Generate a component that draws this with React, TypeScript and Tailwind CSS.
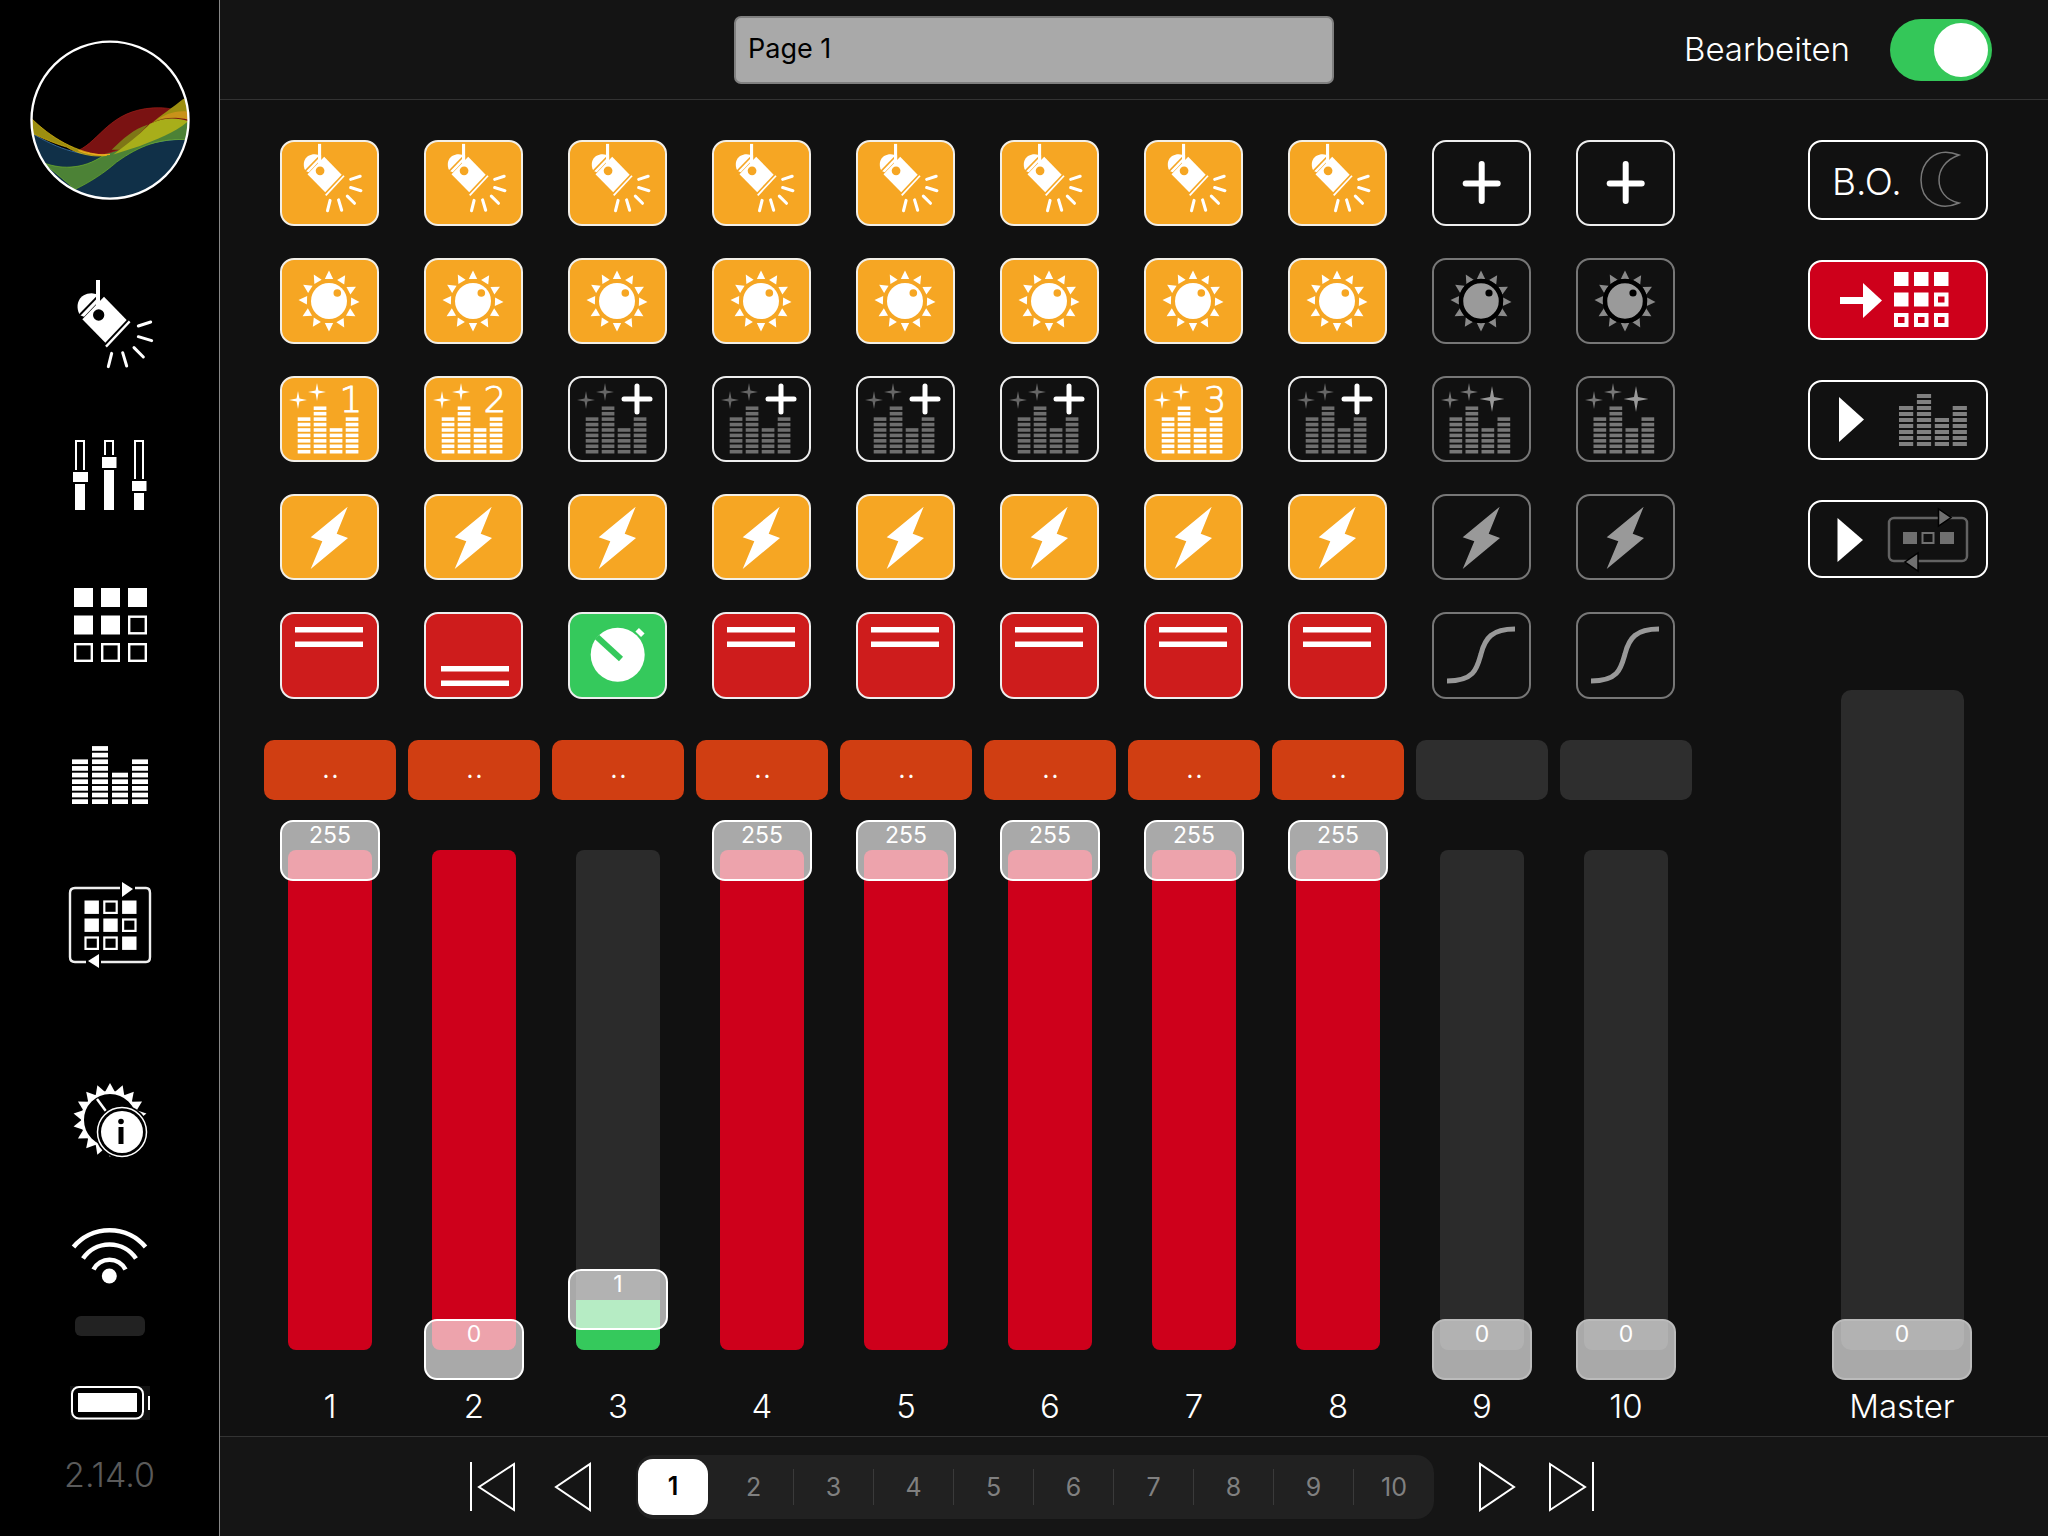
import React from "react";

const range = (n: number) => Array.from({ length: n }, (_, i) => i);

function SpotGlyph({ fg, bg, ray = 9 }: { fg: string; bg: string; ray?: number }) {
  return (
    <g>
      <path d="M240 946 C222 915 238 880 275 880 L300 884 L300 900 L252 950 Z" fill={fg} />
      <path d="M312 890 L380 960 L316 1028 L247 958 Z" fill={fg} />
      <line x1="236" y1="948" x2="296" y2="886" stroke={bg} strokeWidth="6" />
      <line x1="389" y1="964" x2="318" y2="1040" stroke={fg} strokeWidth="7" />
      <rect x="288" y="840" width="12" height="95" fill={fg} />
      <circle cx="296" cy="945" r="17" fill={bg} />
      <g stroke={fg} strokeWidth={ray} strokeLinecap="round" fill="none">
        <line x1="415" y1="978" x2="452" y2="966" />
        <line x1="415" y1="1010" x2="455" y2="1022" />
        <line x1="402" y1="1043" x2="430" y2="1071" />
        <line x1="368" y1="1058" x2="380" y2="1098" />
        <line x1="335" y1="1060" x2="325" y2="1100" />
      </g>
    </g>
  );
}

function Star({ cx, cy, rx, ry, fill }: { cx: number; cy: number; rx: number; ry: number; fill: string }) {
  const w = Math.min(rx, ry) * 0.16;
  return (
    <path
      fill={fill}
      d={`M${cx} ${cy - ry} L${cx + w} ${cy - w} L${cx + rx} ${cy} L${cx + w} ${cy + w} L${cx} ${cy + ry} L${cx - w} ${cy + w} L${cx - rx} ${cy} L${cx - w} ${cy - w} Z`}
    />
  );
}

function EqBars({ x, pitch, w, bottom, segPitch, segH, fill }: { x: number; pitch: number; w: number; bottom: number; segPitch: number; segH: number; fill: string }) {
  const counts = [7, 9, 5, 7];
  return (
    <g fill={fill}>
      {counts.map((c, i) =>
        range(c).map((j) => (
          <rect key={`${i}-${j}`} x={x + i * pitch} y={bottom - segH - j * segPitch} width={w} height={segH} />
        ))
      )}
    </g>
  );
}

function Sun({ fg, gray }: { fg: string; gray?: boolean }) {
  const angles = [0, 32, 62, 92, 120, 150, 180, 212, 240, 272, 302, 330];
  return (
    <g>
      {angles.map((a) => (
        <polygon key={a} points="44.8,21 53.2,21 49,12.5" fill={gray ? "#8a8a8a" : fg} transform={`rotate(${a} 49 43)`} />
      ))}
      {gray ? (
        <>
          <circle cx="49" cy="43" r="20" fill="#9a9a9a" stroke="#000" strokeWidth="4.5" />
          <circle cx="57" cy="35" r="3.6" fill="#000" />
        </>
      ) : (
        <>
          <circle cx="49" cy="43" r="18" fill={fg} />
          <circle cx="57.3" cy="35" r="3.8" fill="#f6a623" />
        </>
      )}
    </g>
  );
}

const BOLT = "67.7,12.7 30.7,43.3 42.3,47.3 30.7,75 68,44 56.7,39.7";

type Kind =
  | "spot" | "sun" | "sunOff" | "plus" | "eq1" | "eq2" | "eq3" | "eqPlus" | "eqOff"
  | "bolt" | "boltOff" | "top" | "bottom" | "timer" | "curve";

const tone: Record<Kind, string> = {
  spot: "bg-[#f6a623] border-[#f2efe8]",
  sun: "bg-[#f6a623] border-[#f2efe8]",
  eq1: "bg-[#f6a623] border-[#f2efe8]",
  eq2: "bg-[#f6a623] border-[#f2efe8]",
  eq3: "bg-[#f6a623] border-[#f2efe8]",
  bolt: "bg-[#f6a623] border-[#f2efe8]",
  top: "bg-[#ce1c1c] border-[#eee]",
  bottom: "bg-[#ce1c1c] border-[#eee]",
  timer: "bg-[#35c95c] border-[#eee]",
  plus: "bg-[#111111] border-[#eee]",
  eqPlus: "bg-[#111111] border-[#eee]",
  sunOff: "bg-[#111111] border-[#777]",
  eqOff: "bg-[#111111] border-[#777]",
  boltOff: "bg-[#111111] border-[#777]",
  curve: "bg-[#111111] border-[#777]",
};

function Glyph({ kind }: { kind: Kind }) {
  switch (kind) {
    case "spot":
      return (
        <g transform="translate(-36 -212) scale(0.257)">
          <SpotGlyph fg="#fff" bg="#f6a623" ray={12} />
        </g>
      );
    case "sun":
      return <Sun fg="#fff" />;
    case "sunOff":
      return <Sun fg="#999" gray />;
    case "plus":
      return (
        <g stroke="#fff" strokeWidth="6" strokeLinecap="round">
          <line x1="49.7" y1="24" x2="49.7" y2="61" />
          <line x1="33.7" y1="43.5" x2="65.7" y2="43.5" />
        </g>
      );
    case "eq1":
    case "eq2":
    case "eq3":
      return (
        <g>
          <EqBars x={17.7} pitch={16} w={12.7} bottom={77.5} segPitch={5.43} segH={3.6} fill="#fff" />
          <Star cx={18} cy={24} rx={9} ry={9} fill="#fff" />
          <Star cx={37} cy={16} rx={9} ry={9} fill="#fff" />
          <text x="71" y="35.5" textAnchor="middle" fontSize="36" fontWeight="200" stroke="#fff" strokeWidth="0.8" fontFamily="'DejaVu Sans', sans-serif" fill="#fff">
            {kind === "eq1" ? "1" : kind === "eq2" ? "2" : "3"}
          </text>
        </g>
      );
    case "eqPlus":
      return (
        <g>
          <EqBars x={17.7} pitch={16} w={12.7} bottom={77.5} segPitch={5.43} segH={3.6} fill="#6e6e6e" />
          <Star cx={18} cy={24} rx={9} ry={9} fill="#666" />
          <Star cx={37} cy={16} rx={9} ry={9} fill="#666" />
          <g stroke="#fff" strokeWidth="5" strokeLinecap="round">
            <line x1="69" y1="10" x2="69" y2="36" />
            <line x1="56" y1="23" x2="82" y2="23" />
          </g>
        </g>
      );
    case "eqOff":
      return (
        <g>
          <EqBars x={17.5} pitch={16} w={12.7} bottom={77.5} segPitch={5.43} segH={3.6} fill="#777" />
          <Star cx={18} cy={24} rx={9} ry={9} fill="#777" />
          <Star cx={37} cy={16} rx={9} ry={9} fill="#777" />
          <Star cx={60} cy={23} rx={12.5} ry={13} fill="#999" />
        </g>
      );
    case "bolt":
      return <polygon points={BOLT} fill="#fff" />;
    case "boltOff":
      return <polygon points={BOLT} fill="#999" />;
    case "top":
      return (
        <g fill="#fff">
          <rect x="15" y="15" width="68" height="5.5" />
          <rect x="15" y="29.5" width="68" height="5.5" />
        </g>
      );
    case "bottom":
      return (
        <g fill="#fff">
          <rect x="17" y="54" width="68" height="5.5" />
          <rect x="17" y="68.5" width="68" height="5.5" />
        </g>
      );
    case "timer":
      return (
        <g>
          <circle cx="49.7" cy="42.7" r="27" fill="#fff" />
          <line x1="29" y1="25" x2="53" y2="47" stroke="#35c95c" strokeWidth="6" />
          <rect x="68" y="18" width="8" height="5" fill="#fff" transform="rotate(45 72 20.5)" />
        </g>
      );
    case "curve":
      return <path d="M15 69 C43 69 45 56 49 42 C53 26 60 17 83 17" fill="none" stroke="#999" strokeWidth="5" />;
  }
}

function ChannelButton({ kind, last }: { kind: Kind; last: boolean }) {
  return (
    <div className={`w-[99px] box-border border-2 rounded-[14px] overflow-hidden ${last ? "h-[87px]" : "h-[86px]"} ${tone[kind]}`}>
      <svg viewBox="2 2 95 82" preserveAspectRatio="xMinYMin meet" className="w-full h-full block">
        <Glyph kind={kind} />
      </svg>
    </div>
  );
}

type Channel = {
  label: string;
  rows: Kind[];
  orange: boolean;
  track: string;
  fill: string;
  handle: string;
  value: string;
};

const redTrack = "bg-[#ce001b]";
const darkTrack = "bg-[#2b2b2b]";

const channels: Channel[] = [
  { label: "1", rows: ["spot", "sun", "eq1", "bolt", "top"], orange: true, track: redTrack, fill: "h-0", handle: "top-[20px] border-white", value: "255" },
  { label: "2", rows: ["spot", "sun", "eq2", "bolt", "bottom"], orange: true, track: redTrack, fill: "h-0", handle: "top-[519px] border-white", value: "0" },
  { label: "3", rows: ["spot", "sun", "eqPlus", "bolt", "timer"], orange: true, track: darkTrack, fill: "h-[50px] bg-[#35c95c]", handle: "top-[469px] border-white", value: "1" },
  { label: "4", rows: ["spot", "sun", "eqPlus", "bolt", "top"], orange: true, track: redTrack, fill: "h-0", handle: "top-[20px] border-white", value: "255" },
  { label: "5", rows: ["spot", "sun", "eqPlus", "bolt", "top"], orange: true, track: redTrack, fill: "h-0", handle: "top-[20px] border-white", value: "255" },
  { label: "6", rows: ["spot", "sun", "eqPlus", "bolt", "top"], orange: true, track: redTrack, fill: "h-0", handle: "top-[20px] border-white", value: "255" },
  { label: "7", rows: ["spot", "sun", "eq3", "bolt", "top"], orange: true, track: redTrack, fill: "h-0", handle: "top-[20px] border-white", value: "255" },
  { label: "8", rows: ["spot", "sun", "eqPlus", "bolt", "top"], orange: true, track: redTrack, fill: "h-0", handle: "top-[20px] border-white", value: "255" },
  { label: "9", rows: ["plus", "sunOff", "eqOff", "boltOff", "curve"], orange: false, track: darkTrack, fill: "h-0", handle: "top-[519px] border-[#bbbbbb]", value: "0" },
  { label: "10", rows: ["plus", "sunOff", "eqOff", "boltOff", "curve"], orange: false, track: darkTrack, fill: "h-0", handle: "top-[519px] border-[#bbbbbb]", value: "0" },
];

function FaderHandle({ value, className }: { value: string; className: string }) {
  return (
    <div className={`absolute h-[61px] box-border border-2 rounded-[13px] bg-white/[0.64] text-white text-[23px] leading-[27px] text-center font-normal ${className}`}>
      {value}
    </div>
  );
}

function ChannelColumn({ c }: { c: Channel }) {
  return (
    <div className="w-[144px] flex flex-col items-center pt-[40px]">
      <div className="flex flex-col gap-[32px] pr-[1px]">
        {c.rows.map((k, i) => (
          <ChannelButton key={i} kind={k} last={i === 4} />
        ))}
      </div>
      <div className={`mt-[41px] w-[132px] h-[60px] rounded-[10px] text-white text-center text-[24px] leading-[30px] pt-[15px] pl-[3px] tracking-[2px] ${c.orange ? "bg-[#d03e12]" : "bg-[#2e2e2e]"}`}>
        {c.orange ? ".." : ""}
      </div>
      <div className="relative w-full h-[580px] pt-[50px]">
        <div className={`mx-auto w-[84px] h-[500px] rounded-[8px] overflow-hidden flex flex-col justify-end ${c.track}`}>
          <div className={c.fill} />
        </div>
        <FaderHandle value={c.value} className={`left-[22px] w-[100px] ${c.handle}`} />
      </div>
      <div className="h-[54px] flex items-center text-white text-[33px] font-light">{c.label}</div>
    </div>
  );
}

function RightButton({ red, children }: { red?: boolean; children: React.ReactNode }) {
  return (
    <div className={`w-[180px] h-[80px] box-border border-2 border-white rounded-[14px] overflow-hidden relative ${red ? "bg-[#ce001b]" : "bg-[#111111]"}`}>
      {children}
    </div>
  );
}

function RightColumn() {
  const filled = [1, 1, 1, 1, 1, 0, 0, 0, 0];
  return (
    <div className="ml-[110px] flex flex-col pt-[40px]">
      <div className="flex flex-col gap-[40px]">
        <RightButton>
          <div className="flex items-center h-full">
            <span className="ml-[22px] mt-[2px] text-white text-[37px] font-light leading-none">B.O.</span>
            <svg viewBox="111 9 48 65" width="48" height="65" className="ml-[17px] mt-[2px]">
              <path d="M151 15 C125 5 113 25 113 40 C113 60 130 72 151 63 C137 60 131 50 131 40 C131 30 137 20 151 15 Z" fill="none" stroke="#777" strokeWidth="1.5" />
            </svg>
          </div>
        </RightButton>
        <RightButton red>
          <svg viewBox="2 2 176 76" className="w-full h-full block">
            <rect x="32" y="37" width="24" height="7" fill="#fff" />
            <polygon points="55,23 55,58 74,40.5" fill="#fff" />
            {filled.map((f, i) => {
              const x = 86 + (i % 3) * 20;
              const y = 12 + Math.floor(i / 3) * 20.5;
              return f ? (
                <rect key={i} x={x} y={y} width="14.5" height="14" fill="#fff" />
              ) : (
                <rect key={i} x={x + 2} y={y + 2} width="10.5" height="10" fill="none" stroke="#fff" strokeWidth="4" />
              );
            })}
          </svg>
        </RightButton>
        <RightButton>
          <svg viewBox="2 2 176 76" className="w-full h-full block">
            <polygon points="31,17 31,62 56,39.5" fill="#fff" />
            <EqBars x={91} pitch={17.9} w={14.2} bottom={66} segPitch={6} segH={4} fill="#808080" />
          </svg>
        </RightButton>
        <div className="w-[180px] h-[78px] box-border border-2 border-white rounded-[14px] overflow-hidden bg-[#111111]">
          <svg viewBox="2 2 176 74" className="w-full h-full block">
            <polygon points="29.5,18 29.5,62 55,40" fill="#fff" />
            <rect x="81" y="18" width="78" height="43" rx="5" fill="none" stroke="#636363" strokeWidth="2.5" />
            <rect x="95" y="32" width="14" height="12" fill="#707070" />
            <rect x="114.5" y="33" width="11" height="10" fill="none" stroke="#707070" strokeWidth="2" />
            <rect x="132" y="32" width="14" height="12" fill="#707070" />
            <polygon points="130.5,9 130.5,26 143,17.5" fill="#707070" stroke="#000" strokeWidth="1.5" />
            <polygon points="110,53 110,71 97,62" fill="#707070" stroke="#000" strokeWidth="1.5" />
          </svg>
        </div>
      </div>
      <div className="relative ml-[24px] w-[140px] h-[690px] mt-[112px]">
        <div className="mx-auto w-[123px] h-[660px] rounded-[10px] bg-[#2b2b2b]" />
        <FaderHandle value="0" className="left-0 w-[140px] top-[629px] border-[#bbbbbb]" />
      </div>
      <div className="ml-[24px] w-[140px] h-[54px] flex items-center justify-center text-white text-[33px] font-light">Master</div>
    </div>
  );
}

function Logo() {
  return (
    <svg viewBox="90 118 480 484" width="160" height="161" className="ml-[30px] mt-[40px] block">
      <defs>
        <clipPath id="logoClip">
          <circle cx="330" cy="359" r="236" />
        </clipPath>
      </defs>
      <circle cx="330" cy="359" r="236" fill="#000" />
      <g clipPath="url(#logoClip)">
        <path d="M90 395 C180 450 250 470 330 460 C400 445 470 415 570 415 L570 610 L90 610 Z" fill="#103048" stroke="#4a90d0" strokeWidth="2" />
        <path d="M130 487 C190 510 260 505 320 458 C380 410 440 370 510 355 L570 360 L570 418 C480 412 420 435 350 485 C310 520 270 545 225 567 Z" fill="#4c8236" stroke="#74b52a" strokeWidth="2" />
        <path d="M235 450 C300 420 330 330 460 322 C500 320 530 325 570 348 L570 362 C500 350 460 370 420 410 C380 445 320 465 280 462 Z" fill="#7a1212" stroke="#a02018" strokeWidth="2" />
        <path d="M335 448 C370 415 400 385 445 372 C420 400 395 425 365 448 Z" fill="#7e7616" />
        <path d="M340 462 C400 420 430 390 450 370 C490 350 530 350 565 362 C520 400 470 415 420 437 Z" fill="#a8ae1a" />
        <path d="M455 368 C480 345 520 320 550 295 L570 290 L570 355 C530 345 490 350 455 368 Z" fill="#9c8e10" />
        <path d="M470 358 C490 345 520 330 556 332 L570 338 L570 358 C530 350 500 350 470 358 Z" fill="#c8921a" />
        <path d="M90 350 C150 410 230 460 320 465 C290 470 240 465 200 440 C150 425 110 405 90 395 Z" fill="#9c8e10" stroke="#e8c010" strokeWidth="2" />
        <path d="M235 450 C260 460 290 466 330 462" fill="none" stroke="#f0a820" strokeWidth="4" />
      </g>
      <circle cx="330" cy="359" r="236" fill="none" stroke="#fff" strokeWidth="7" />
    </svg>
  );
}

function Sidebar() {
  const teeth = range(18);
  const gridFilled = [1, 1, 1, 1, 1, 0, 0, 0, 0];
  const loopFilled = [1, 0, 1, 1, 1, 0, 0, 0, 1];
  const eqCounts = [7, 9, 5, 7];
  return (
    <div className="w-[219px] h-full bg-black flex flex-col shrink-0">
      <div className="h-[230px]">
        <Logo />
      </div>
      <svg width="219" height="170" viewBox="0 690 657 510" className="block">
        <SpotGlyph fg="#fff" bg="#000" />
      </svg>
      <svg width="219" height="130" viewBox="0 400 219 130" className="block">
        <g fill="#fff" stroke="none">
          <path d="M75 440 H85 V510 H75 Z M77 442 V472 H83 V442 Z" fillRule="evenodd" />
          <path d="M104 440 H114 V510 H104 Z M106 442 V457 H112 V442 Z" fillRule="evenodd" />
          <path d="M134 440 H144 V510 H134 Z M136 442 V481 H142 V442 Z" fillRule="evenodd" />
        </g>
        <rect x="77" y="442" width="6" height="28" fill="#000" />
        <rect x="106" y="442" width="6" height="14" fill="#000" />
        <rect x="136" y="442" width="6" height="37" fill="#000" />
        <rect x="72" y="470" width="17" height="14" fill="#000" />
        <rect x="101" y="455" width="17" height="15" fill="#000" />
        <rect x="131" y="479" width="17" height="14" fill="#000" />
        <rect x="73" y="472" width="15" height="10" fill="#fff" />
        <rect x="102" y="457" width="14.5" height="11" fill="#fff" />
        <rect x="132" y="481" width="14.5" height="10" fill="#fff" />
      </svg>
      <svg width="219" height="170" viewBox="0 530 219 170" className="block">
        {gridFilled.map((f, i) => {
          const x = 74 + (i % 3) * 27;
          const y = 588 + Math.floor(i / 3) * 27.5;
          return f ? (
            <rect key={i} x={x} y={y} width="19" height="19" fill="#fff" />
          ) : (
            <rect key={i} x={x + 1.2} y={y + 1.2} width="16.6" height="16.6" fill="none" stroke="#fff" strokeWidth="2.4" />
          );
        })}
      </svg>
      <svg width="219" height="130" viewBox="0 700 219 130" className="block">
        <g fill="#fff">
          {eqCounts.map((c, i) =>
            range(c).map((j) => <rect key={`${i}-${j}`} x={72 + i * 20} y={799.3 - j * 6.65} width="16" height="4.7" />)
          )}
        </g>
      </svg>
      <svg width="219" height="170" viewBox="0 830 219 170" className="block">
        <path d="M120 888 H75 Q70 888 70 893 V957 Q70 962 75 962 H86 M101 962 H146 Q150 962 150 957 V893 Q150 888 146 888 H135" fill="none" stroke="#eee" strokeWidth="2.4" />
        <polygon points="122,882 122,897 133,889" fill="#fff" />
        <polygon points="99,954 99,968 88,961" fill="#fff" />
        {loopFilled.map((f, i) => {
          const x = 84.5 + (i % 3) * 18.8;
          const y = 900.5 + Math.floor(i / 3) * 18;
          return f ? (
            <rect key={i} x={x} y={y} width="14.4" height="13.4" fill="#fff" />
          ) : (
            <rect key={i} x={x + 1} y={y + 1} width="12.4" height="11.4" fill="none" stroke="#fff" strokeWidth="2.2" />
          );
        })}
      </svg>
      <svg width="219" height="190" viewBox="0 1001 219 190" className="block">
        {teeth.map((i) => (
          <polygon key={i} points="105,1093 115,1093 110,1084" fill="#fff" transform={`rotate(${i * 20} 110 1121)`} />
        ))}
        <circle cx="110" cy="1121" r="27.5" fill="none" stroke="#fff" strokeWidth="3" />
        <line x1="97" y1="1100" x2="108" y2="1115" stroke="#fff" strokeWidth="2.5" />
        <circle cx="122" cy="1133" r="27" fill="#000" />
        <circle cx="122" cy="1133" r="24.5" fill="none" stroke="#fff" strokeWidth="1.5" />
        <circle cx="122" cy="1133" r="21" fill="#fff" />
        <circle cx="121" cy="1122.5" r="2.8" fill="#000" />
        <rect x="118.5" y="1128" width="5" height="17" fill="#000" />
      </svg>
      <svg width="219" height="126" viewBox="0 1190 219 126" className="block">
        <circle cx="109.3" cy="1276" r="7.5" fill="#fff" />
        <g fill="none" stroke="#fff" strokeWidth="4.6">
          <path d="M93.5 1269.5 A18 18 0 0 1 125.5 1269.5" />
          <path d="M83 1258.5 A32 32 0 0 1 136 1258.5" />
          <path d="M73.5 1247 A47 47 0 0 1 145.5 1247" />
        </g>
      </svg>
      <div className="ml-[75px] w-[70px] h-[20px] rounded-[6px] bg-[#222222]" />
      <svg width="219" height="94" viewBox="0 1336 219 94" className="block">
        <rect x="70" y="1386" width="80" height="34" fill="#111" />
        <rect x="72" y="1387" width="71" height="31.5" rx="7" fill="#000" stroke="#fff" strokeWidth="2" />
        <rect x="78" y="1393" width="59" height="19" fill="#fff" />
        <rect x="148" y="1396" width="2" height="14" fill="#fff" />
      </svg>
      <div className="h-[88px] flex items-center justify-center text-[34px] font-light text-[#5a5a5a]">2.14.0</div>
    </div>
  );
}

function Header() {
  return (
    <div className="h-[100px] shrink-0 bg-[#141414] border-b border-[#333333] flex items-center box-border">
      <div className="ml-[514px] w-[600px] h-[68px] box-border border-2 border-[#808080] rounded-[7px] bg-[#a9a9a9] flex items-center pl-[12px] text-[27px] text-black">
        Page 1
      </div>
      <div className="ml-auto text-white text-[33px] font-light">Bearbeiten</div>
      <div className="ml-[40px] mr-[56px] w-[102px] h-[62px] rounded-full bg-[#34c759] flex items-center justify-end pr-[4px]">
        <div className="w-[54px] h-[54px] rounded-full bg-white" />
      </div>
    </div>
  );
}

function Footer() {
  return (
    <div className="h-[100px] shrink-0 bg-[#151515] border-t border-[#333333] box-border flex items-center pl-[250px]">
      <svg width="46" height="50" viewBox="470 1461 46 50" className="block" fill="none" stroke="#fff" strokeWidth="2">
        <line x1="471" y1="1461" x2="471" y2="1510" />
        <polygon points="514,1463 514,1509 479,1486" />
      </svg>
      <svg width="38" height="50" viewBox="554 1461 38 50" className="block ml-[38px]" fill="none" stroke="#fff" strokeWidth="2">
        <polygon points="590,1463 590,1509 556,1486" />
      </svg>
      <div className="ml-[44px] w-[798px] h-[64px] rounded-[18px] bg-[#212121] flex items-center">
        <div className="w-[78px] flex items-center">
          <div className="ml-[2px] w-[70px] h-[56px] rounded-[15px] bg-white flex items-center justify-center text-black text-[25px] font-semibold">1</div>
        </div>
        {range(9).map((i) => (
          <div key={i} className="w-[80px] flex items-center">
            <div className="flex-1 text-center text-[25px] pt-[2px] text-[#808080]">{i + 2}</div>
            {i < 8 ? <div className="w-px h-[36px] bg-[#3a3a3a]" /> : null}
          </div>
        ))}
      </div>
      <svg width="37" height="50" viewBox="1479 1461 37 50" className="block ml-[45px]" fill="none" stroke="#fff" strokeWidth="2">
        <polygon points="1480,1463 1480,1509 1514,1486" />
      </svg>
      <svg width="46" height="50" viewBox="1549 1461 46 50" className="block ml-[33px]" fill="none" stroke="#fff" strokeWidth="2">
        <polygon points="1550,1463 1550,1509 1585,1486" />
        <line x1="1593" y1="1461" x2="1593" y2="1510" />
      </svg>
    </div>
  );
}

export default function App() {
  return (
    <div className="w-[2048px] h-[1536px] overflow-hidden flex bg-black font-[family-name:Inter,sans-serif]">
      <Sidebar />
      <div className="w-px bg-[#888888] shrink-0" />
      <div className="flex-1 flex flex-col bg-[#111111]">
        <Header />
        <div className="flex-1 flex pl-[38px]">
          {channels.map((c) => (
            <ChannelColumn key={c.label} c={c} />
          ))}
          <RightColumn />
        </div>
        <Footer />
      </div>
    </div>
  );
}
